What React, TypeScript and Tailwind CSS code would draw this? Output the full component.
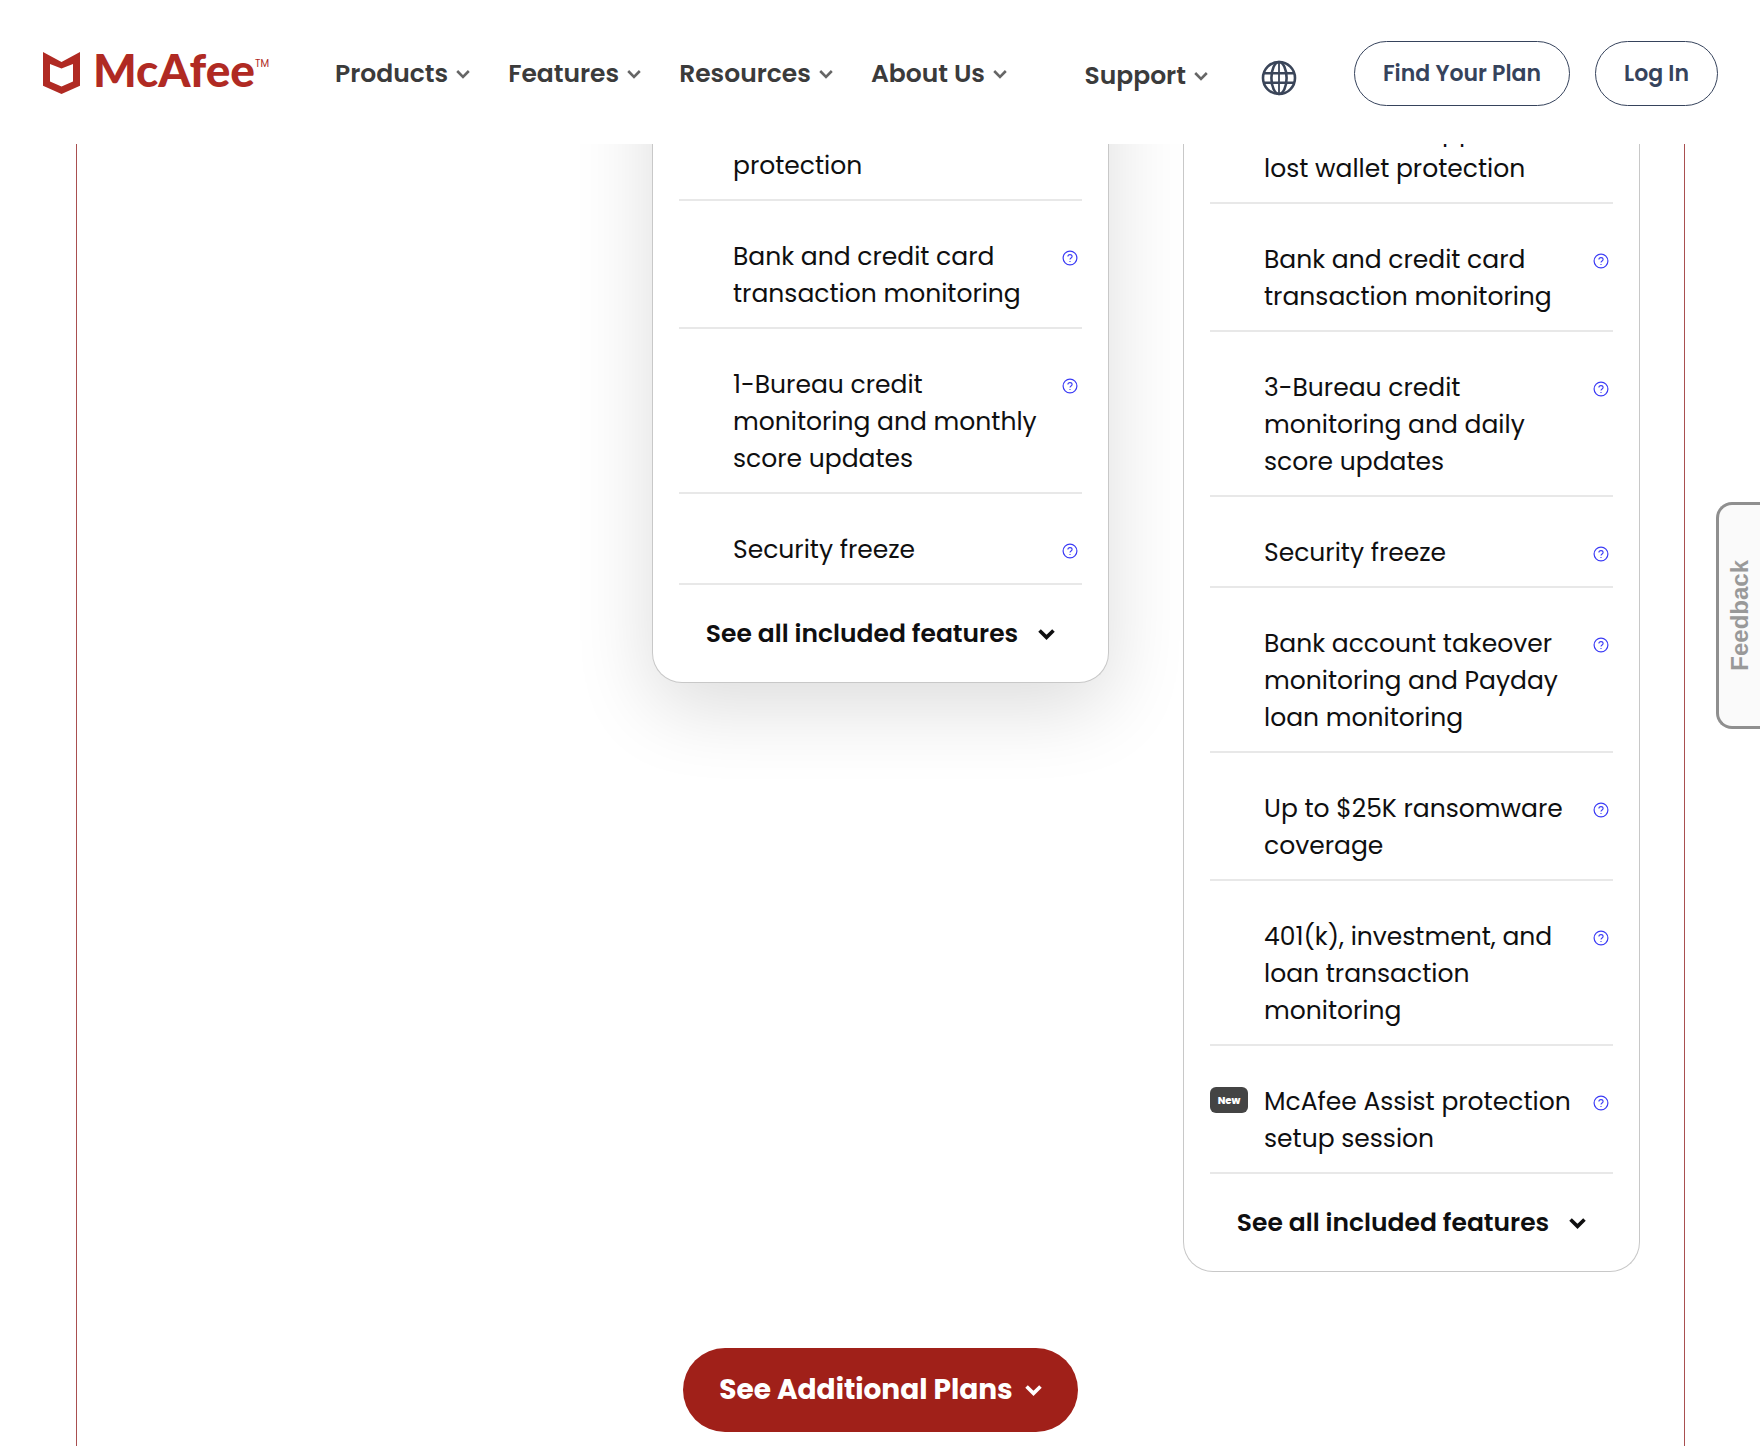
import clsx from 'clsx';

interface Feature {
  lines: string[];
  isNew?: boolean;
}

interface PlanCardProps {
  features: Feature[];
  className?: string;
}

const NAV_ITEMS = ['Products', 'Features', 'Resources', 'About Us'];

const ADVANCED_FEATURES: Feature[] = [
  { lines: ['Restoration support,', 'protection'] },
  { lines: ['Bank and credit card', 'transaction monitoring'] },
  { lines: ['1-Bureau credit', 'monitoring and monthly', 'score updates'] },
  { lines: ['Security freeze'] },
];

const ULTIMATE_FEATURES: Feature[] = [
  { lines: ['Restoration support,', 'lost wallet protection'] },
  { lines: ['Bank and credit card', 'transaction monitoring'] },
  { lines: ['3-Bureau credit', 'monitoring and daily', 'score updates'] },
  { lines: ['Security freeze'] },
  { lines: ['Bank account takeover', 'monitoring and Payday', 'loan monitoring'] },
  { lines: ['Up to $25K ransomware', 'coverage'] },
  { lines: ['401(k), investment, and', 'loan transaction', 'monitoring'] },
  { lines: ['McAfee Assist protection', 'setup session'], isNew: true },
];

function Chevron({ className = '' }: { className?: string }) {
  return (
    <svg viewBox="0 0 14 10" fill="none" stroke="currentColor" className={className} aria-hidden="true">
      <path d="M1.2 2 L7 7.8 L12.8 2" />
    </svg>
  );
}

function HelpIcon() {
  return (
    <svg viewBox="0 0 16 16" fill="none" stroke="currentColor" className="size-4" aria-hidden="true">
      <circle cx="8" cy="8" r="6.9" strokeWidth="1.2" />
      <path d="M5.9 6.6 C5.9 3.9 10.1 4 10.1 6.5 C10.1 8 8 8 8 9.6" strokeWidth="1.1" />
      <path d="M8 10.9 V12" strokeWidth="1.1" />
    </svg>
  );
}

function GlobeIcon() {
  return (
    <svg viewBox="0 0 36 36" fill="none" stroke="currentColor" strokeWidth="2.6" className="size-9" aria-hidden="true">
      <circle cx="18" cy="18" r="16" />
      <ellipse cx="18" cy="18" rx="7.6" ry="16" />
      <path d="M18 2 V34" strokeWidth="1.8" />
      <path d="M2.5 13.3 H33.5 M2.5 22.7 H33.5" />
    </svg>
  );
}

function Logo() {
  return (
    <a href="#" className="flex items-start text-[#b02a23]" aria-label="McAfee home">
      <svg viewBox="0 0 37 42" className="h-[42px] w-[37px]" fill="currentColor" aria-hidden="true">
        <path
          fillRule="evenodd"
          d="M0 0 L18.5 10 L37 0 V33.7 L18.5 42 L0 33.7 Z M7 12 L18.5 16.5 L30 12 V29.5 L18.5 34.5 L7 29.5 Z"
        />
      </svg>
      <span className="ml-[13px] font-['Lato',sans-serif] text-[46px] leading-9 font-black">McAfee</span>
      <span className="mt-1 text-[10px] leading-4">TM</span>
    </a>
  );
}

function PlanCard({ features, className = '' }: PlanCardProps) {
  return (
    <article className={clsx('rounded-b-[30px] border border-t-0 border-[#c8c8c8] bg-white px-[26px]', className)}>
      <ul>
        {features.map((feature) => (
          <li
            key={feature.lines.join(' ')}
            className="flex border-b-2 border-[#e8e8e8] pt-[37px] pb-[15px] text-[25px] leading-[37px] text-[#0f0f10]"
          >
            <div className="w-[54px] shrink-0">
              {feature.isNew && (
                <span className="mt-1 flex h-[26px] w-[38px] items-center justify-center rounded-md bg-[#444444] text-[10px] font-extrabold text-white">
                  New
                </span>
              )}
            </div>
            <p className="min-w-0 flex-1 whitespace-nowrap">
              {feature.lines.map((line) => (
                <span key={line} className="block">
                  {line}
                </span>
              ))}
            </p>
            <button type="button" className="mt-3 mr-1 h-4 shrink-0 text-[#3b3bf5]" aria-label={`About ${feature.lines.join(' ')}`}>
              <HelpIcon />
            </button>
          </li>
        ))}
      </ul>
      <button
        type="button"
        className="flex h-[97px] w-full items-center justify-center gap-5 text-[25px] font-semibold whitespace-nowrap text-[#0f0f10]"
      >
        See all included features
        <Chevron className="h-3 w-[17px] stroke-3" />
      </button>
    </article>
  );
}

function Header() {
  return (
    <header className="relative z-10 flex h-36 items-start bg-white pr-[42px] pl-[43px] text-[#3b3b3b]">
      <div className="mt-[52px]">
        <Logo />
      </div>
      <nav className="mt-[56px] ml-[66px] flex gap-[38px] text-[25px] leading-9 font-semibold whitespace-nowrap">
        {NAV_ITEMS.map((item) => (
          <button key={item} type="button" className="flex items-center gap-2">
            {item}
            <Chevron className="h-[10px] w-[14px] stroke-[2.6] text-[#666666]" />
          </button>
        ))}
      </nav>
      <div className="ml-auto flex">
        <button type="button" className="mt-[58px] flex h-9 items-center gap-2 text-[25px] leading-9 font-semibold">
          Support
          <Chevron className="h-[10px] w-[14px] stroke-[2.6] text-[#666666]" />
        </button>
        <button type="button" className="mt-[60px] ml-[53px] h-9 text-[#3a4559]" aria-label="Choose region">
          <GlobeIcon />
        </button>
        <div className="mt-[41px] ml-[57px] flex gap-[25px] text-[22px] font-semibold whitespace-nowrap text-[#36435c]">
          <a href="#" className="flex h-[65px] items-center rounded-full border border-[#36435c] px-7">
            Find Your Plan
          </a>
          <a href="#" className="flex h-[65px] items-center rounded-full border border-[#36435c] px-7">
            Log In
          </a>
        </div>
      </div>
    </header>
  );
}

export default function App() {
  return (
    <div className="flex min-h-screen flex-col overflow-hidden bg-white font-['Poppins','Inter',sans-serif]">
      <Header />
      <main className="mr-[75px] ml-[76px] flex flex-1 flex-col border-x border-[#a94f50] px-11 pb-3">
        {/* The cards run up underneath the header */}
        <div className="-mt-[271px] grid grid-cols-3 items-start gap-[74px]">
          <PlanCard
            features={ADVANCED_FEATURES}
            className="col-start-2 pt-[200px] shadow-[0_24px_80px_rgba(0,0,0,0.14)]"
          />
          <PlanCard features={ULTIMATE_FEATURES} className="col-start-3 pt-[203px]" />
        </div>
        <button
          type="button"
          className="mt-[76px] flex h-[84px] items-center gap-3 self-center rounded-full bg-[#a02019] px-9 text-[28px] font-bold text-white"
        >
          See Additional Plans
          <Chevron className="h-3 w-[17px] stroke-3" />
        </button>
      </main>
      <button
        type="button"
        className="fixed top-[502px] right-0 z-20 flex h-[227px] w-11 items-center justify-center rounded-l-2xl border-[3px] border-r-0 border-[#8f8f8f] bg-[#fafafa]"
      >
        <span className="rotate-180 font-['Liberation_Sans',sans-serif] text-2xl font-bold text-[#999999] [writing-mode:vertical-rl]">
          Feedback
        </span>
      </button>
    </div>
  );
}
